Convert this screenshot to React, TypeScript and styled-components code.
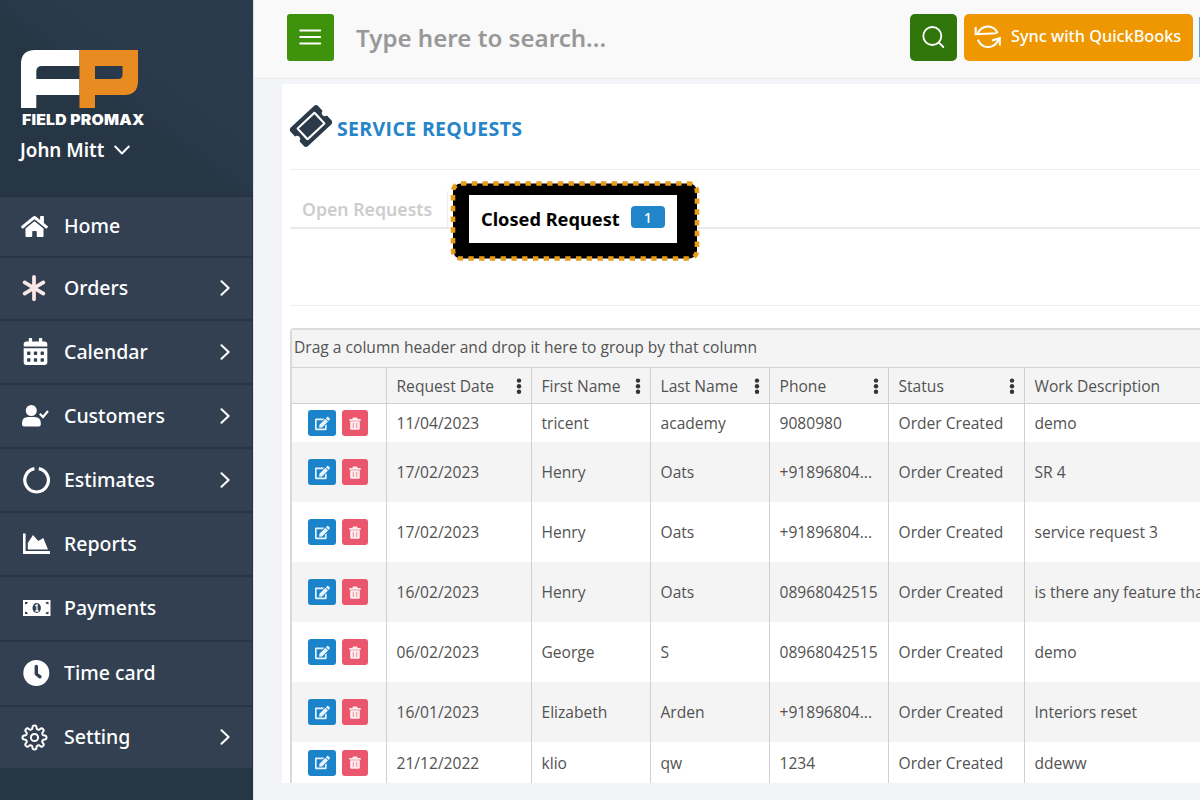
import React from "react";
import styled, { createGlobalStyle } from "styled-components";
import { FaHome, FaCalendarAlt, FaEdit, FaTicketAlt } from "react-icons/fa";
import { FaAsterisk } from "react-icons/fa6";

const GlobalStyle = createGlobalStyle`
  *, *::before, *::after { box-sizing: border-box; }
  body { margin: 0; font-family: "Noto Sans", "Open Sans", sans-serif; }
  svg { display: block; flex-shrink: 0; }
`;

const Page = styled.div`
  display: flex;
  width: 1200px;
  height: 800px;
  overflow: hidden;
  background: #f3f4f8;
`;

const Sidebar = styled.aside`
  display: flex;
  flex-direction: column;
  width: 253px;
  flex-shrink: 0;
  background: #273645;
  color: #fff;
`;

const Brand = styled.div`
  height: 197px;
  width: 254px;
  padding: 50px 0 0 20px;
  border-bottom: 1px solid #253341;
  background: linear-gradient(217deg, #2b3b4e 0%, #2a3a4c 47%, #273645 54%, #273645 100%);
`;

const BrandName = styled.div`
  margin: 3px 0 0 2px;
  font-family: Inter, sans-serif;
  font-weight: 900;
  font-size: 14.2px;
  line-height: 17px;
  white-space: nowrap;
  letter-spacing: 0.2px;
  transform: scaleX(1.11);
  transform-origin: left center;
`;

const User = styled.div`
  display: flex;
  align-items: center;
  gap: 10px;
  margin-top: 9px;
  font-size: 18.800px;
  font-weight: 600;
  line-height: 26px;
`;

const Nav = styled.nav`
  display: flex;
  flex-direction: column;
  width: 252px;
`;

const NavItem = styled.div<{ $h: number; $last?: boolean }>`
  display: flex;
  align-items: center;
  height: ${(p) => p.$h}px;
  padding: 0 22px 1px 21px;
  background: #324052;
  border-bottom: ${(p) => (p.$last ? "none" : "2px solid #283747")};
`;

const NavIcon = styled.span<{ $tint?: string }>`
  display: flex;
  width: 43px;
  color: ${(p) => p.$tint || "#fff"};
`;

const NavLabel = styled.span`
  flex: 1;
  font-size: 19.500px;
  font-weight: 500;
  line-height: 26px;
`;

const Main = styled.main`
  display: flex;
  flex-direction: column;
  width: 947px;
  border-left: 1px solid #dfe0e8;
`;

const TopBar = styled.header`
  display: flex;
  align-items: center;
  height: 79px;
  padding: 0 0 4px 33px;
  background: #f9f9f9;
  border-bottom: 1px solid #e8e9ec;
`;

const SquareButton = styled.button<{ $bg: string; $r: number }>`
  display: flex;
  align-items: center;
  justify-content: center;
  width: 47px;
  height: 47px;
  padding: 0;
  border: 0;
  border-radius: ${(p) => p.$r}px;
  background: ${(p) => p.$bg};
`;

const SearchHint = styled.div`
  flex: 1;
  margin: 2px 0 0 22px;
  font-size: 24.100px;
  font-weight: 650;
  line-height: 32px;
  color: #989898;
`;

const SyncButton = styled.button`
  display: flex;
  align-items: center;
  width: 229px;
  height: 47px;
  margin: 0 6px 0 7px;
  padding: 0 0 0 10px;
  gap: 9px;
  border: 0;
  border-radius: 5px;
  background: #ee9700;
  color: #fff;
  font: 500 16.300px/24px "Noto Sans", sans-serif;
  white-space: nowrap;
  & > span { margin-top: -3px; }
`;

const NextButton = styled.span`
  width: 1px;
  height: 40px;
  background: #5fa5d3;
`;

const Card = styled.section`
  display: flex;
  flex-direction: column;
  height: 699px;
  margin: 5px 0 0 28px;
  padding-left: 8px;
  background: #fff;
  overflow: hidden;
`;

const TitleRow = styled.div`
  display: flex;
  align-items: center;
  gap: 5px;
  height: 86px;
  border-bottom: 1px solid #eeeeef;
`;

const TicketBox = styled.span`
  display: flex;
  justify-content: center;
  width: 42px;
  margin-top: -2px;
  & > svg { transform: rotate(-43deg); }
`;

const Title = styled.h1`
  margin: 4px 0 0;
  font-family: "Open Sans", sans-serif;
  font-size: 19.500px;
  font-weight: 700;
  line-height: 26px;
  letter-spacing: 0.350px;
  color: #2585c8;
`;

const Tabs = styled.div`
  position: relative;
  display: flex;
  height: 59px;
  border-bottom: 2px solid #e9e9ea;
`;

const OpenTab = styled.div`
  width: 158px;
  margin-top: 21px;
  padding: 5px 0 0 12px;
  border-right: 1px solid #efefef;
  font-size: 17.700px;
  font-weight: 600;
  line-height: 26px;
  color: #cdcdcd;
  white-space: nowrap;
`;

const Highlight = styled.div`
  position: absolute;
  left: 161px;
  top: 11px;
  width: 247px;
  height: 80px;
`;

const Dots = styled.svg`
  position: absolute;
  left: -1px;
  top: 0;
`;

const ClosedTab = styled.div`
  display: flex;
  align-items: center;
  position: absolute;
  left: 18px;
  top: 14px;
  width: 208px;
  height: 48px;
  padding: 0 12px;
  justify-content: space-between;
  background: #fff;
  color: #000;
  font-size: 18.200px;
  font-weight: 700;
  line-height: 26px;
  white-space: nowrap;
`;

const Count = styled.span`
  width: 34px;
  height: 22px;
  margin-top: -4px;
  border-radius: 4px;
  background: #2085c9;
  color: #fff;
  font-size: 14.500px;
  font-weight: 500;
  line-height: 22px;
  text-align: center;
`;

const FilterSpace = styled.div`
  height: 77px;
  border-bottom: 1px solid #eeeeef;
`;

const Grid = styled.div`
  margin-top: 22px;
  border-left: 2px solid #dadada;
  border-top: 2px solid #dcdcdc;
  border-top-left-radius: 4px;
  color: #525252;
  font-family: "Open Sans", sans-serif;
  font-size: 15.600px;
  white-space: nowrap;
`;

const GroupBar = styled.div`
  height: 38px;
  padding: 0 0 2px 2px;
  line-height: 35px;
  background: #f4f4f4;
  border-bottom: 1px solid #d3d3d3;
`;

const Row = styled.div<{ $h: number; $shade?: boolean; $head?: boolean }>`
  display: grid;
  grid-template-columns: 95px 145px 119px 119px 119px 136px 176px;
  height: ${(p) => p.$h}px;
  background: ${(p) => (p.$shade || p.$head ? "#f4f4f4" : "#fff")};
  border-bottom: ${(p) => (p.$head ? "1px solid #cfcfcf" : "none")};
`;

const Cell = styled.div<{ $head?: boolean }>`
  display: flex;
  align-items: center;
  justify-content: space-between;
  padding: ${(p) => (p.$head ? "1px 9px 0 9.500px" : "0 0 0 9.500px")};
  border-right: 1px solid #d0d0d0;
  overflow: hidden;
  &:last-child { border-right: 0; }
`;

const ActionCell = styled(Cell)`
  justify-content: flex-start;
  gap: 6px;
  padding: 0 0 0 16px;
`;

const Action = styled.button<{ $danger?: boolean }>`
  display: flex;
  align-items: center;
  justify-content: center;
  width: ${(p) => (p.$danger ? 26 : 28)}px;
  height: 26px;
  padding: 0;
  border: 0;
  border-radius: 3px;
  background: ${(p) => (p.$danger ? "#ea566b" : "#1b83c9")};
  color: #e8f3fb;
`;

const Chevron = () => (
  <svg width="10" height="16" viewBox="0 0 10 16" fill="none" stroke="#fff" strokeWidth="2" strokeLinecap="round" strokeLinejoin="round">
    <path d="M1.500 1.200L8.600 8l-7.100 6.800" />
  </svg>
);

const Kebab = () => (
  <svg width="6" height="16" viewBox="0 0 6 16" fill="#333">
    <circle cx="3" cy="2.600" r="2.200" />
    <circle cx="3" cy="8.200" r="2.200" />
    <circle cx="3" cy="13.800" r="2.200" />
  </svg>
);

const Logo = () => (
  <svg width="120" height="58" viewBox="0 0 120 58">
    <path fill="#fff" d="M1 58V14Q1 0 15 0H59.500V16H22Q16.300 16 16.300 21.500V29H59.500V45H16.300V58Z" />
    <path fill="#e88c22" fillRule="evenodd" d="M59.500 0H118V31Q118 45 104 45H75V58H59.500ZM75 16V29H98Q102.500 29 102.500 24.500V16Z" />
  </svg>
);

const UserCheck = () => (
  <svg width="28" height="22" viewBox="0 0 28 22">
    <circle cx="10.300" cy="5.500" r="5.500" fill="#fff" />
    <path fill="#fff" d="M1 19.500V18Q1 12 7 12H13.500Q19.800 12 19.800 18V19.500Q19.800 21.500 17.800 21.500H3Q1 21.500 1 19.500Z" />
    <path fill="none" stroke="#fff" strokeWidth="2.200" d="M18.800 8.800L22 12L27 6" />
  </svg>
);

const Ring = () => (
  <svg width="30" height="28" viewBox="0 0 30 28">
    <path d="M17.800 2.600A11.800 11.800 0 1 1 13.400 2.600" fill="none" stroke="#fff" strokeWidth="3.200" />
  </svg>
);

const AreaChart = () => (
  <svg width="30" height="22" viewBox="0 0 30 22" fill="#fff">
    <path d="M2 0.500H4.600V18H29V21H2Z" />
    <path d="M6.800 16.500V10L12 2L17.300 8L22.300 5L27 16.500Z" />
  </svg>
);

const Bill = () => (
  <svg width="30" height="18" viewBox="0 0 30 18">
    <path fill="#fff" d="M2 1H29.500V17H2Z" />
    <g fill="#324052">
      <path d="M4 3H7Q6.500 5.300 4 5.500ZM27.500 3H24.500Q25 5.300 27.500 5.500ZM4 15H7Q6.500 12.700 4 12.500ZM27.500 15H24.500Q25 12.700 27.500 12.500Z" />
      <ellipse cx="15.700" cy="9" rx="4.200" ry="4.900" />
    </g>
    <path d="M14.200 7L16 5.800V12M14.200 12H17.700" fill="none" stroke="#fff" strokeWidth="1.300" />
  </svg>
);

const gearPath = (() => {
  const points: string[] = [];
  for (let i = 0; i <= 160; i++) {
    const a = (i / 160) * Math.PI * 2;
    const r = 10.300 + 1.700 * Math.tanh(2.200 * Math.cos(8 * a));
    points.push(`${(13.500 + r * Math.sin(a)).toFixed(2)} ${(13.500 - r * Math.cos(a)).toFixed(2)}`);
  }
  return `M${points.join("L")}Z`;
})();

const Gear = () => (
  <svg width="27" height="27" viewBox="0 0 27 27" fill="none" stroke="#fff" strokeWidth="2" strokeLinejoin="round">
    <path d={gearPath} />
    <circle cx="13.500" cy="13.500" r="3.600" />
  </svg>
);

const ClockFace = () => (
  <svg width="30" height="26" viewBox="0 0 30 26">
    <circle cx="15.300" cy="13" r="13" fill="#fff" />
    <path d="M15.300 6.500V14L19 16.800" fill="none" stroke="#324052" strokeWidth="3.400" strokeLinecap="round" strokeLinejoin="round" />
  </svg>
);

const SyncIcon = () => (
  <svg width="28" height="24" viewBox="0 0 28 24" fill="none" stroke="#fff" strokeWidth="2">
    <path d="M3.800 8.200C8.500-1 20-0.500 23.500 8.200M1.700 2V9.200L22.500 8.200" />
    <path d="M3.800 14.600C8 24.500 20 24.500 24.500 14.600M18 15.500L25.800 13.200V20.500" />
  </svg>
);

const Trash = () => (
  <svg width="12" height="13" viewBox="0 0 12 13">
    <path fill="#fdecef" d="M4 0.500H8L8.700 2H11.700V3.700H0.300V2H3.300ZM1.200 4.300H10.800V11.500Q10.800 12.800 9.500 12.800H2.500Q1.200 12.800 1.200 11.500Z" />
    <path d="M4.300 6V11M7.700 6V11" stroke="#f0909d" strokeWidth="1" />
  </svg>
);

const navItems = [
  { label: "Home", h: 61, icon: <FaHome size={27} /> },
  { label: "Orders", h: 63, more: true, tint: "#fbe8e6", icon: <FaAsterisk size={30} style={{ marginLeft: -2 }} /> },
  { label: "Calendar", h: 64, more: true, icon: <FaCalendarAlt size={27} style={{ marginLeft: 1 }} /> },
  { label: "Customers", h: 64, more: true, icon: <UserCheck /> },
  { label: "Estimates", h: 64, more: true, icon: <Ring /> },
  { label: "Reports", h: 64, icon: <AreaChart /> },
  { label: "Payments", h: 65, icon: <Bill /> },
  { label: "Time card", h: 65, icon: <ClockFace /> },
  { label: "Setting", h: 61, more: true, icon: <Gear /> },
];

const headers = ["Request Date", "First Name", "Last Name", "Phone", "Status", "Work Description"];

const rows = [
  { h: 38, cells: ["11/04/2023", "tricent", "academy", "9080980", "Order Created", "demo"] },
  { h: 60, cells: ["17/02/2023", "Henry", "Oats", "+91896804...", "Order Created", "SR 4"] },
  { h: 60, cells: ["17/02/2023", "Henry", "Oats", "+91896804...", "Order Created", "service request 3"] },
  { h: 60, cells: ["16/02/2023", "Henry", "Oats", "08968042515", "Order Created", "is there any feature that"] },
  { h: 60, cells: ["06/02/2023", "George", "S", "08968042515", "Order Created", "demo"] },
  { h: 60, cells: ["16/01/2023", "Elizabeth", "Arden", "+91896804...", "Order Created", "Interiors reset"] },
  { h: 41, cells: ["21/12/2022", "klio", "qw", "1234", "Order Created", "ddeww"] },
];

export default function App() {
  return (
    <Page>
      <GlobalStyle />
      <Sidebar>
        <Brand>
          <Logo />
          <BrandName>FIELD PROMAX</BrandName>
          <User>
            John Mitt
            <svg width="16" height="10" viewBox="0 0 16 10" fill="none" stroke="#fff" strokeWidth="1.900" strokeLinecap="round" strokeLinejoin="round">
              <path d="M1.200 1.500L8 8.500L14.800 1.500" />
            </svg>
          </User>
        </Brand>
        <Nav>
          {navItems.map((n, i) => (
            <NavItem key={n.label} $h={n.h} $last={i === navItems.length - 1}>
              <NavIcon $tint={n.tint}>{n.icon}</NavIcon>
              <NavLabel>{n.label}</NavLabel>
              {n.more && <Chevron />}
            </NavItem>
          ))}
        </Nav>
      </Sidebar>
      <Main>
        <TopBar>
          <SquareButton $bg="#3f920b" $r={3}>
            <svg width="23" height="16" viewBox="0 0 23 16" stroke="#fff" strokeWidth="2" strokeLinecap="round">
              <path d="M1.200 1.500H21.200M1.200 8H21.200M1.200 14.500H21.200" />
            </svg>
          </SquareButton>
          <SearchHint>Type here to search...</SearchHint>
          <SquareButton $bg="#30760b" $r={5}>
            <svg width="23" height="24" viewBox="0 0 23 24" fill="none" stroke="#fff" strokeWidth="1.800" strokeLinecap="round">
              <circle cx="10.300" cy="11" r="9" />
              <path d="M16.800 17.500L21.300 22" />
            </svg>
          </SquareButton>
          <SyncButton>
            <SyncIcon />
            <span>Sync with QuickBooks</span>
          </SyncButton>
          <NextButton />
        </TopBar>
        <Card>
          <TitleRow>
            <TicketBox>
              <FaTicketAlt size={38} color="#2b3a48" />
            </TicketBox>
            <Title>SERVICE REQUESTS</Title>
          </TitleRow>
          <Tabs>
            <OpenTab>Open Requests</OpenTab>
            <Highlight>
              <Dots width="250" height="80" viewBox="0 0 250 80">
                <rect x="3" y="2.500" width="244" height="75" rx="8" fill="#000" />
                <rect x="3" y="2.500" width="244" height="75" rx="8" fill="none" stroke="#e99c17" strokeWidth="4.600" strokeDasharray="5.380 5.380" />
              </Dots>
              <ClosedTab>
                Closed Request <Count>1</Count>
              </ClosedTab>
            </Highlight>
          </Tabs>
          <FilterSpace />
          <Grid>
            <GroupBar>Drag a column header and drop it here to group by that column</GroupBar>
            <Row $h={36} $head>
              <Cell $head />
              {headers.map((h, i) => (
                <Cell key={h} $head>
                  {h}
                  {i < 5 && <Kebab />}
                </Cell>
              ))}
            </Row>
            {rows.map((r, i) => (
              <Row key={i} $h={r.h} $shade={i % 2 === 1}>
                <ActionCell>
                  <Action><FaEdit size={15} /></Action>
                  <Action $danger><Trash /></Action>
                </ActionCell>
                {r.cells.map((c, j) => (
                  <Cell key={j}>{c}</Cell>
                ))}
              </Row>
            ))}
          </Grid>
        </Card>
      </Main>
    </Page>
  );
}
